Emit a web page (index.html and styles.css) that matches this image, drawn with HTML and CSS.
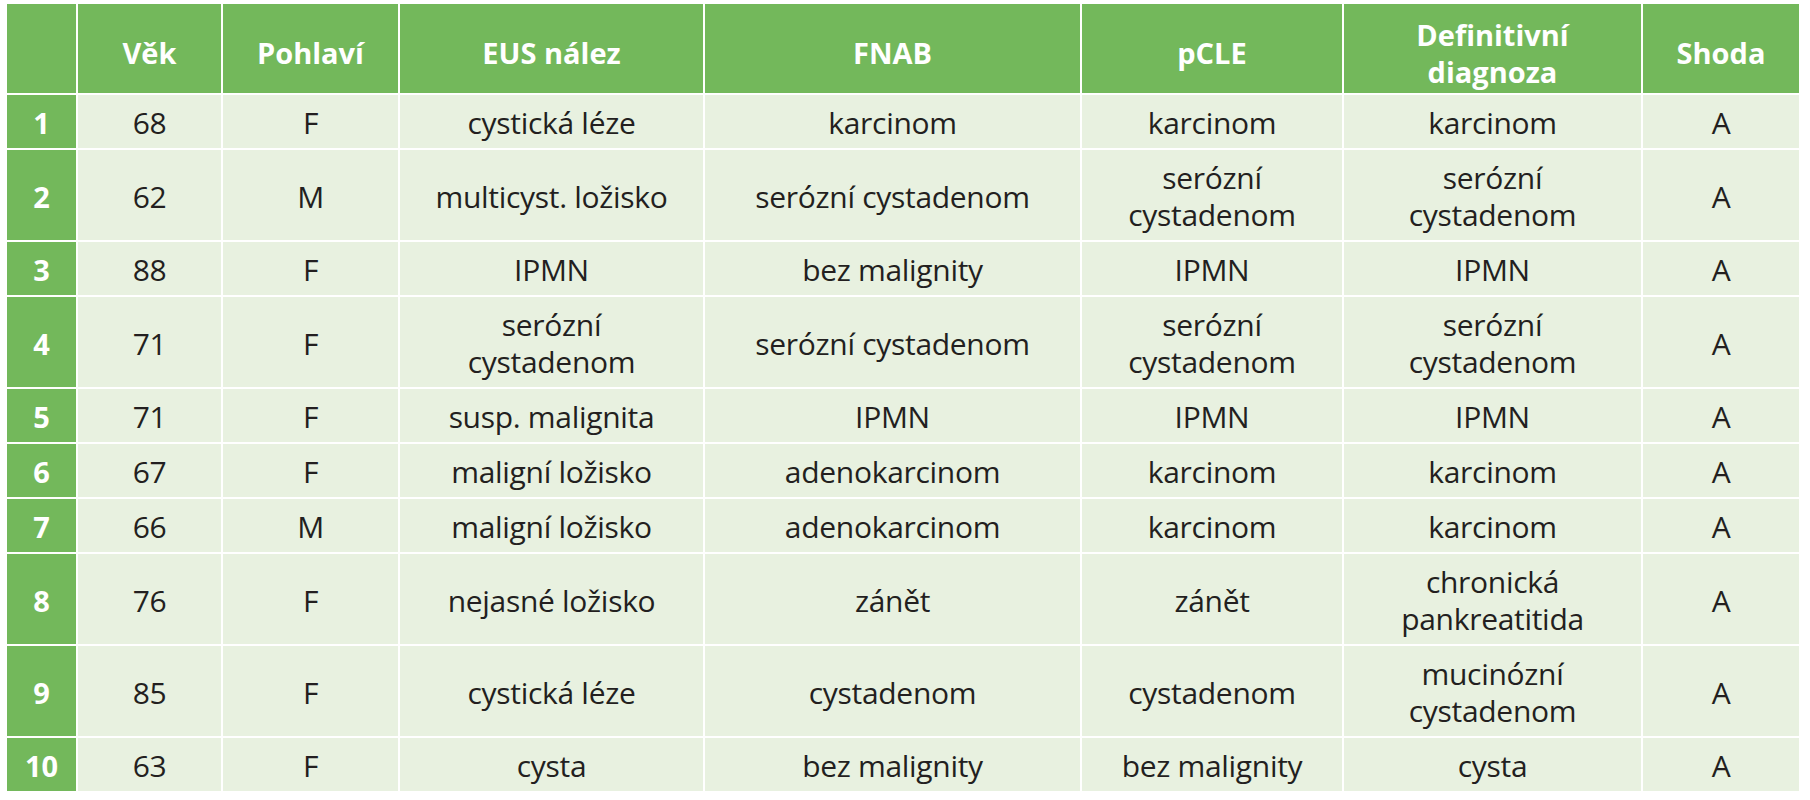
FILE: index.html
```html
<!DOCTYPE html>
<html lang="cs">
<head>
<meta charset="utf-8">
<title>Tabulka</title>
<link rel="stylesheet" href="styles.css">
</head>
<body>
<table class="data">
  <colgroup>
    <col class="c-num"><col class="c-age"><col class="c-sex"><col class="c-eus"><col class="c-fnab"><col class="c-pcle"><col class="c-def"><col class="c-match">
  </colgroup>
  <thead>
    <tr>
      <th class="corner"></th>
      <th>Věk</th>
      <th>Pohlaví</th>
      <th>EUS nález</th>
      <th>FNAB</th>
      <th>pCLE</th>
      <th>Definitivní<br>diagnoza</th>
      <th>Shoda</th>
    </tr>
  </thead>
  <tbody>
    <tr><th class="num">1</th><td>68</td><td>F</td><td>cystická léze</td><td>karcinom</td><td>karcinom</td><td>karcinom</td><td>A</td></tr>
    <tr><th class="num">2</th><td>62</td><td>M</td><td>multicyst. ložisko</td><td>serózní cystadenom</td><td>serózní<br>cystadenom</td><td>serózní<br>cystadenom</td><td>A</td></tr>
    <tr><th class="num">3</th><td>88</td><td>F</td><td>IPMN</td><td>bez malignity</td><td>IPMN</td><td>IPMN</td><td>A</td></tr>
    <tr><th class="num">4</th><td>71</td><td>F</td><td>serózní<br>cystadenom</td><td>serózní cystadenom</td><td>serózní<br>cystadenom</td><td>serózní<br>cystadenom</td><td>A</td></tr>
    <tr><th class="num">5</th><td>71</td><td>F</td><td>susp. malignita</td><td>IPMN</td><td>IPMN</td><td>IPMN</td><td>A</td></tr>
    <tr><th class="num">6</th><td>67</td><td>F</td><td>maligní ložisko</td><td>adenokarcinom</td><td>karcinom</td><td>karcinom</td><td>A</td></tr>
    <tr><th class="num">7</th><td>66</td><td>M</td><td>maligní ložisko</td><td>adenokarcinom</td><td>karcinom</td><td>karcinom</td><td>A</td></tr>
    <tr><th class="num">8</th><td>76</td><td>F</td><td>nejasné ložisko</td><td>zánět</td><td>zánět</td><td>chronická<br>pankreatitida</td><td>A</td></tr>
    <tr><th class="num">9</th><td>85</td><td>F</td><td>cystická léze</td><td>cystadenom</td><td>cystadenom</td><td>mucinózní<br>cystadenom</td><td>A</td></tr>
    <tr><th class="num">10</th><td>63</td><td>F</td><td>cysta</td><td>bez malignity</td><td>bez malignity</td><td>cysta</td><td>A</td></tr>
  </tbody>
</table>
</body>
</html>
```

FILE: styles.css
```css
html, body {
  margin: 0;
  padding: 0;
  background: #ffffff;
}

body {
  padding: 2px 0 0 5px;
  font-family: "Open Sans", "Noto Sans", sans-serif;
}

.data {
  table-layout: fixed;
  border-collapse: separate;
  border-spacing: 2px;
  width: 1796px;
  background: #ffffff;
}

.c-num { width: 69px; }
.c-age { width: 143px; }
.c-sex { width: 175px; }
.c-eus { width: 303px; }
.c-fnab { width: 375px; }
.c-pcle { width: 260px; }
.c-def { width: 297px; }
.c-match { width: 156px; }

.data thead th {
  background: #73b85b;
  color: #ffffff;
  font-weight: 700;
  font-size: 29px;
  line-height: 37px;
  height: 89px;
  padding: 8px 4px 0 4px;
  box-sizing: border-box;
  text-align: center;
  vertical-align: middle;
}

.data td,
.data th.num {
  padding: 9px 4px 7px 4px;
  line-height: 37px;
  text-align: center;
  vertical-align: middle;
}

.data td {
  background: #e8f1e0;
  color: #231f20;
  font-size: 30px;
  font-weight: 400;
  letter-spacing: -0.3px;
}

.data th.num {
  background: #73b85b;
  color: #ffffff;
  font-size: 29px;
  font-weight: 700;
}
```
